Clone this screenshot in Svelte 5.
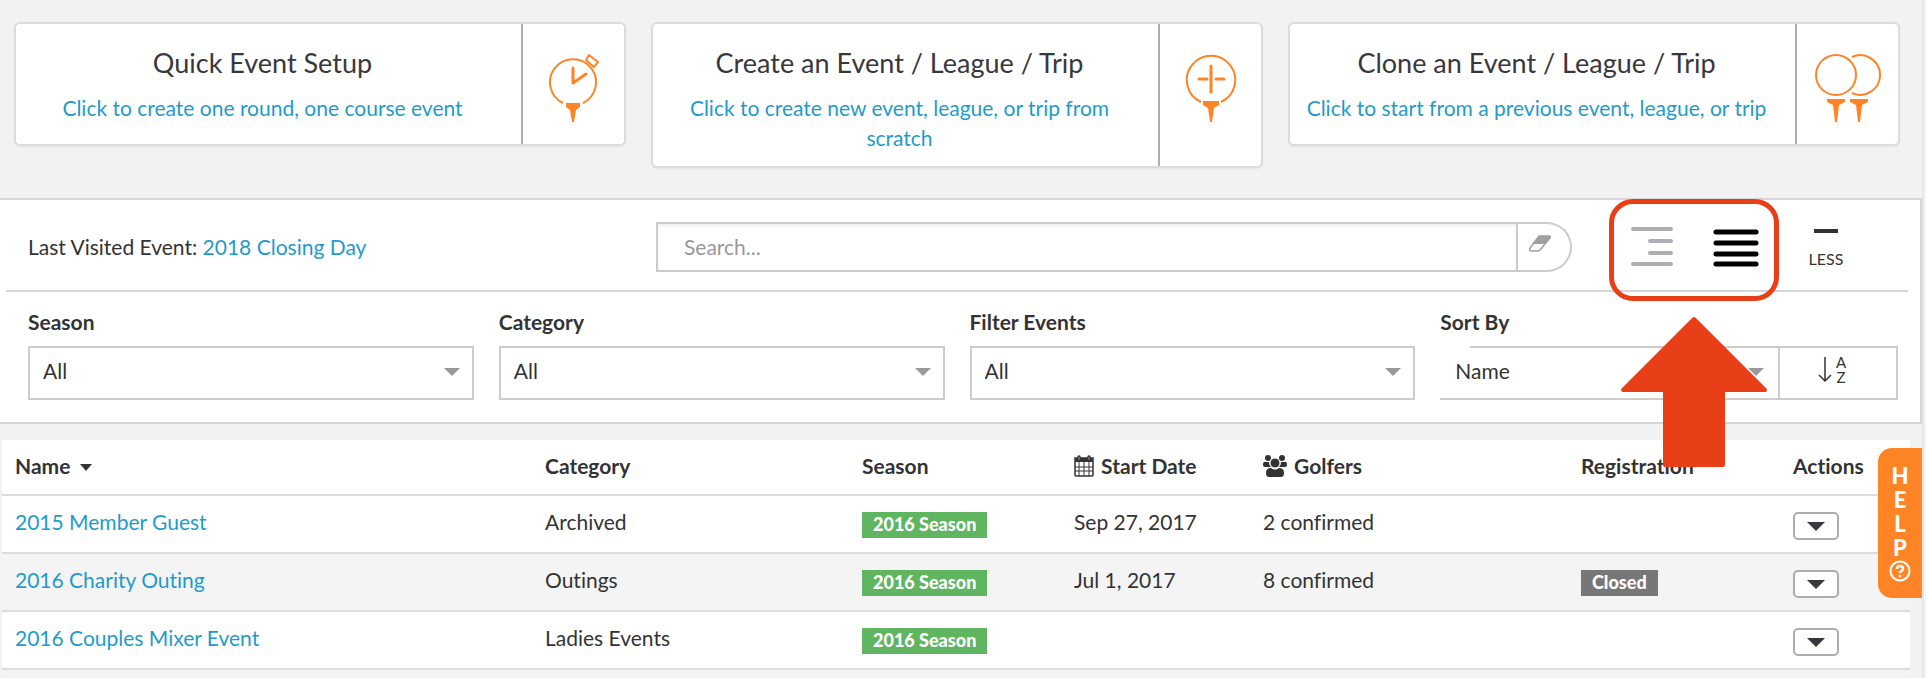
<script lang="ts">
	interface EventRow {
		name: string
		category: string
		season: string
		start: string
		golfers: string
		registration: string
	}

	const filters = [
		{ id: 'season', label: 'Season' },
		{ id: 'category', label: 'Category' },
		{ id: 'filter', label: 'Filter Events' }
	]

	const cards = [
		{ icon: 'clock', title: 'Quick Event Setup', text: 'Click to create one round, one course event' },
		{ icon: 'plus', title: 'Create an Event / League / Trip', text: 'Click to create new event, league, or trip from scratch' },
		{ icon: 'clone', title: 'Clone an Event / League / Trip', text: 'Click to start from a previous event, league, or trip' }
	]

	const events: EventRow[] = [
		{ name: '2015 Member Guest', category: 'Archived', season: '2016 Season', start: 'Sep 27, 2017', golfers: '2 confirmed', registration: '' },
		{ name: '2016 Charity Outing', category: 'Outings', season: '2016 Season', start: 'Jul 1, 2017', golfers: '8 confirmed', registration: 'Closed' },
		{ name: '2016 Couples Mixer Event', category: 'Ladies Events', season: '2016 Season', start: '', golfers: '', registration: '' }
	]

	let search = $state('')
</script>

<div class="page">
	<div class="cards">
		{#each cards as card (card.icon)}
			<a class="card" href="#{card.icon}">
				<span class="card__body">
					<span class="card__title">{card.title}</span>
					<span class="card__text">{card.text}</span>
				</span>
				<span class="card__icon">
					{#if card.icon === 'clock'}
						<svg width="52" height="70" viewBox="0 0 52 70" fill="none" stroke="#ff8426" stroke-width="2">
							<path d="M15 49A23 23 0 1 1 35 49" />
							<path d="M25 14V29L38 20" stroke-width="3" stroke-linecap="round" stroke-linejoin="round" />
							<path d="M41 1L50 8L46 13L38 6Z" stroke-linejoin="round" />
							<path d="M18 49H32V53L28 56L26 68H24L22 56L18 53Z" fill="#ff8426" stroke="none" />
						</svg>
					{:else if card.icon === 'plus'}
						<svg width="52" height="70" viewBox="0 0 52 70" fill="none" stroke="#ff8426" stroke-width="2">
							<path d="M16 48A24.200 24.200 0 1 1 36 48" />
							<path d="M26 12V38M14 25H22M31 25H39" stroke-width="3" stroke-linecap="round" />
							<path d="M18 47H34V51L29 54L27 68H25L23 54L18 51Z" fill="#ff8426" stroke="none" />
						</svg>
					{:else}
						<svg width="66" height="70" viewBox="0 0 66 70" fill="none" stroke="#ff8426" stroke-width="2">
							<circle cx="21" cy="21" r="20" />
							<path d="M37 3A19.800 19.800 0 1 1 37 39" />
							<path d="M12 45H30V48L24 51L22 68H20L18 51L12 48Z" fill="#ff8426" stroke="none" />
							<path d="M35 45H53V48L47 51L45 68H43L41 51L35 48Z" fill="#ff8426" stroke="none" />
						</svg>
					{/if}
				</span>
			</a>
		{/each}
	</div>

	<section class="panel">
		<div class="toolbar">
			<div class="last">Last Visited Event: <a href="#last">2018 Closing Day</a></div>
			<div class="search">
				<input type="text" aria-label="Search" placeholder="Search..." bind:value={search} />
				<button type="button" aria-label="Clear search" onclick={() => (search = '')}>
					<svg width="24" height="18" viewBox="0 0 24 18">
						<path d="M11 1H21Q23 1 22 3L17 9H4Z" fill="#a0a0a0" />
						<path d="M11 1H21Q23 1 22 3L12 15Q11 16 10 16H3Q1 16 2 13Z" fill="none" stroke="#a0a0a0" stroke-width="1.5" />
					</svg>
				</button>
			</div>
			<div class="views">
				<button type="button" aria-label="Tree view">
					<svg width="46" height="42" viewBox="0 0 46 42" stroke="#aeaeb4" stroke-width="4" stroke-linecap="round">
						<path d="M4 3H42M21 15H42M21 27H42M4 38H42" />
					</svg>
				</button>
				<button type="button" aria-label="List view">
					<svg width="46" height="42" viewBox="0 0 46 42" stroke="#000" stroke-width="5" stroke-linecap="round">
						<path d="M3 6H43M3 17H43M3 28H43M3 38H43" />
					</svg>
				</button>
				<div class="callout">
					<svg class="callout__arrow" width="150" height="152" viewBox="0 0 150 152">
						<path d="M75 3L146 74H104V149H46V74H4Z" fill="#e83f18" stroke="#e83f18" stroke-width="4" stroke-linejoin="round" />
					</svg>
				</div>
			</div>
			<button class="less" type="button">
				<span class="less__bar"></span>
				LESS
			</button>
		</div>

		<div class="filters">
			{#each filters as f (f.id)}
				<div class="field">
					<label for={f.id}>{f.label}</label>
					<div class="select">
						<select id={f.id}><option>All</option></select>
					</div>
				</div>
			{/each}
			<div class="field">
				<label for="sort">Sort By</label>
				<div class="sort">
					<div class="select select--sort">
						<select id="sort"><option>Name</option></select>
					</div>
					<button class="order" type="button" aria-label="Sort ascending">
						<svg width="14" height="26" viewBox="0 0 14 26" fill="none" stroke="#333" stroke-width="1.5">
							<path d="M7 0V24M1 18L7 24L13 18" />
						</svg>
						<span class="order__az"><span>A</span><span>Z</span></span>
					</button>
				</div>
			</div>
		</div>
	</section>

	<table>
		<colgroup>
			<col class="c-name" /><col class="c-category" /><col class="c-season" /><col class="c-start" />
			<col class="c-golfers" /><col class="c-registration" /><col class="c-actions" />
		</colgroup>
		<thead>
			<tr>
				<th>Name <span class="caret"></span></th>
				<th>Category</th>
				<th>Season</th>
				<th>
					<svg width="20" height="22" viewBox="0 0 20 22">
						<path d="M1 3H19V20Q19 21 18 21H2Q1 21 1 20Z" fill="#fff" stroke="#333" stroke-width="1.5" />
						<path d="M1 3H19V7H1Z" fill="#333" />
						<path d="M5 7V21M10 7V21M15 7V21M1 12H19M1 16H19" stroke="#333" fill="none" />
						<path d="M4 5V2Q4 1 5 1T6 2V5M14 5V2Q14 1 15 1T16 2V5" fill="#fff" stroke="#333" stroke-width="1.5" />
					</svg>
					Start Date
				</th>
				<th>
					<svg width="24" height="22" viewBox="0 0 24 22" fill="#333">
						<circle cx="5" cy="3" r="3" /><circle cx="19" cy="3" r="3" />
						<path d="M0 10Q0 6 3 7L6 7Q6 10 8 12H2Q0 12 0 10ZM24 10Q24 6 21 7L18 7Q18 10 16 12H22Q24 12 24 10Z" />
						<circle cx="12" cy="8" r="5" stroke="#fff" />
						<path d="M3 18Q3 13 8 13Q12 16 16 13Q21 13 21 18Q21 22 18 22H6Q3 22 3 18Z" />
					</svg>
					Golfers
				</th>
				<th>Registration</th>
				<th>Actions</th>
			</tr>
		</thead>
		<tbody>
			{#each events as e (e.name)}
				<tr>
					<td><a href="#event">{e.name}</a></td>
					<td>{e.category}</td>
					<td><span class="badge">{e.season}</span></td>
					<td>{e.start}</td>
					<td>{e.golfers}</td>
					<td>{#if e.registration}<span class="badge badge--closed">{e.registration}</span>{/if}</td>
					<td><button class="action" type="button" aria-label="Actions for {e.name}"></button></td>
				</tr>
			{/each}
			<tr class="rest"><td colspan="7"></td></tr>
		</tbody>
	</table>

	<button class="help" type="button">
		<span>H</span><span>E</span><span>L</span><span>P</span>
		<svg width="22" height="22" viewBox="0 0 22 22" fill="none" stroke="#fff">
			<circle cx="11" cy="11" r="9.5" stroke-width="2" />
			<path d="M8 9Q8 6 11 6T14 9Q14 10 12.500 11Q11 12 11 13" stroke-width="2.500" />
			<circle cx="11" cy="16" r="1" fill="#fff" />
		</svg>
	</button>
</div>

<style>
	:global(body) { background: #f4f4f4; }

	.page {
		position: relative;
		box-sizing: border-box;
		min-height: 100vh;
		margin-right: 2px;
		border-right: 2px solid #e6e6e6;
		background: #f2f2f2;
		font-family: Lato, "Liberation Sans", sans-serif;
		font-size: 21px;
		font-variant-ligatures: none;
		line-height: 30px;
		color: #333;
	}
	.page * { box-sizing: border-box; }

	a { color: #1f9bcb; text-decoration: none; }
	button, input, select { font: inherit; color: inherit; }
	button { padding: 0; border: 0; background: none; cursor: pointer; }

	.cards {
		display: grid;
		grid-template-columns: repeat(3, 1fr);
		align-items: start;
		gap: 25px;
		padding: 22px 22px 30px 14px;
	}
	.card {
		display: flex;
		min-height: 124px;
		border: 2px solid #dcdcdc;
		border-radius: 6px;
		background: #fff;
		box-shadow: 0 1px 2px rgba(0, 0, 0, 0.06);
	}
	.card__body {
		display: flex;
		flex: 1;
		flex-direction: column;
		gap: 14px;
		padding: 23px 22px 13px 10px;
		text-align: center;
	}
	.card__title { font-size: 27px; line-height: 32px; color: #38383c; }
	.card__icon {
		display: flex;
		flex: none;
		justify-content: center;
		width: 103px;
		padding-top: 30px;
		border-left: 2px solid #aeaeb2;
	}

	.panel {
		border: 2px solid #d6d6d6;
		border-left: 0;
		background: #fff;
	}
	.toolbar {
		display: flex;
		align-items: center;
		height: 92px;
		margin: 0 12px 0 6px;
		padding: 4px 0 0 22px;
		border-bottom: 2px solid #d6d6d6;
	}
	.last { width: 628px; }
	.search { display: flex; flex: 1; height: 50px; }
	.search input {
		flex: 1;
		min-width: 0;
		padding: 0 26px;
		border: 2px solid #ccc;
		background: #fff;
		box-shadow: inset 0 2px 3px rgba(0, 0, 0, 0.07);
		outline: none;
	}
	.search input::placeholder { color: #999; opacity: 1; }
	.search button {
		width: 54px;
		padding: 0 18px 4px 10px;
		border: 2px solid #ccc;
		border-left: 0;
		border-radius: 0 25px 25px 0;
	}
	.views {
		position: relative;
		display: flex;
		gap: 38px;
		margin-left: 57px;
	}
	.views svg { display: block; }
	.callout {
		position: absolute;
		z-index: 2;
		inset: -27px -20px -33px -20px;
		border: 5px solid #e83f18;
		border-radius: 24px;
		pointer-events: none;
	}
	.callout__arrow { position: absolute; top: 112px; left: 5px; }
	.less {
		display: flex;
		flex-direction: column;
		align-items: center;
		gap: 16px;
		width: 60px;
		margin: 4px 52px 0 37px;
		font-size: 16px;
		line-height: 20px;
	}
	.less__bar { width: 24px; height: 4px; background: #333; }

	.filters {
		display: grid;
		grid-template-columns: repeat(3, 446fr) 458fr;
		gap: 25px;
		padding: 15px 22px 22px 28px;
	}
	.field label { display: block; margin-bottom: 9px; font-weight: 700; }
	.select { position: relative; }
	.select::after {
		content: '';
		position: absolute;
		top: 22px;
		right: 14px;
		border: 8px solid transparent;
		border-top-color: #999;
		border-bottom: 0;
		pointer-events: none;
	}
	.select select {
		display: block;
		width: 100%;
		height: 54px;
		padding: 0 13px 4px;
		border: 2px solid #ccc;
		border-radius: 0;
		background: #fff;
		appearance: none;
	}
	.sort { display: flex; }
	.select--sort { flex: 1; }
	.select--sort select { padding-left: 15px; border-width: 2px 0; }
	/* the top edge starts past the label */
	.select--sort::before {
		content: '';
		position: absolute;
		width: 30px;
		height: 2px;
		background: #fff;
	}
	.order {
		display: flex;
		align-items: center;
		justify-content: center;
		gap: 4px;
		width: 120px;
		padding: 0 12px 6px 0;
		border: 2px solid #ccc;
	}
	.order__az { display: flex; flex-direction: column; font-size: 15px; line-height: 15px; }

	table {
		width: calc(100% - 14px);
		margin: 16px 12px 0 2px;
		border-collapse: separate;
		border-spacing: 0;
		table-layout: fixed;
		background: #fff;
	}
	.c-name { width: 530px; }
	.c-category { width: 317px; }
	.c-season { width: 212px; }
	.c-start { width: 189px; }
	.c-golfers { width: 318px; }
	.c-registration { width: 212px; }
	th, td {
		height: 58px;
		padding: 0 13px 4px;
		border-bottom: 2px solid #dcdcdc;
		text-align: left;
		white-space: nowrap;
	}
	th { height: 56px; padding-bottom: 2px; }
	th svg { margin-right: 2px; vertical-align: -3px; }
	tbody tr:nth-child(even) { background: #f4f4f4; }
	.rest td { height: 8px; padding: 0; border: 0; }
	.caret {
		display: inline-block;
		margin-left: 5px;
		border: 6px solid transparent;
		border-top: 7px solid #333;
		border-bottom: 0;
		vertical-align: 3px;
	}
	.badge {
		display: inline-block;
		height: 26px;
		padding: 0 11px;
		background: #5fb560;
		color: #fff;
		font-size: 18px;
		font-weight: 900;
		line-height: 24px;
		vertical-align: -2px;
	}
	.badge--closed { background: #777; }
	.action {
		display: flex;
		align-items: center;
		justify-content: center;
		width: 46px;
		height: 28px;
		margin-top: 8px;
		border: 2px solid #acacb2;
		border-radius: 5px;
		background: #fff;
	}
	.action::after {
		content: '';
		border: 9px solid transparent;
		border-top-color: #38383f;
		border-bottom: 0;
	}

	.help {
		position: absolute;
		z-index: 1;
		top: 448px;
		right: 0;
		display: flex;
		flex-direction: column;
		align-items: center;
		width: 44px;
		height: 150px;
		padding-top: 16px;
		border-radius: 14px 0 0 14px;
		background: #ff8426;
		color: #fff;
		font-size: 22px;
		font-weight: 900;
		line-height: 24px;
	}
</style>
